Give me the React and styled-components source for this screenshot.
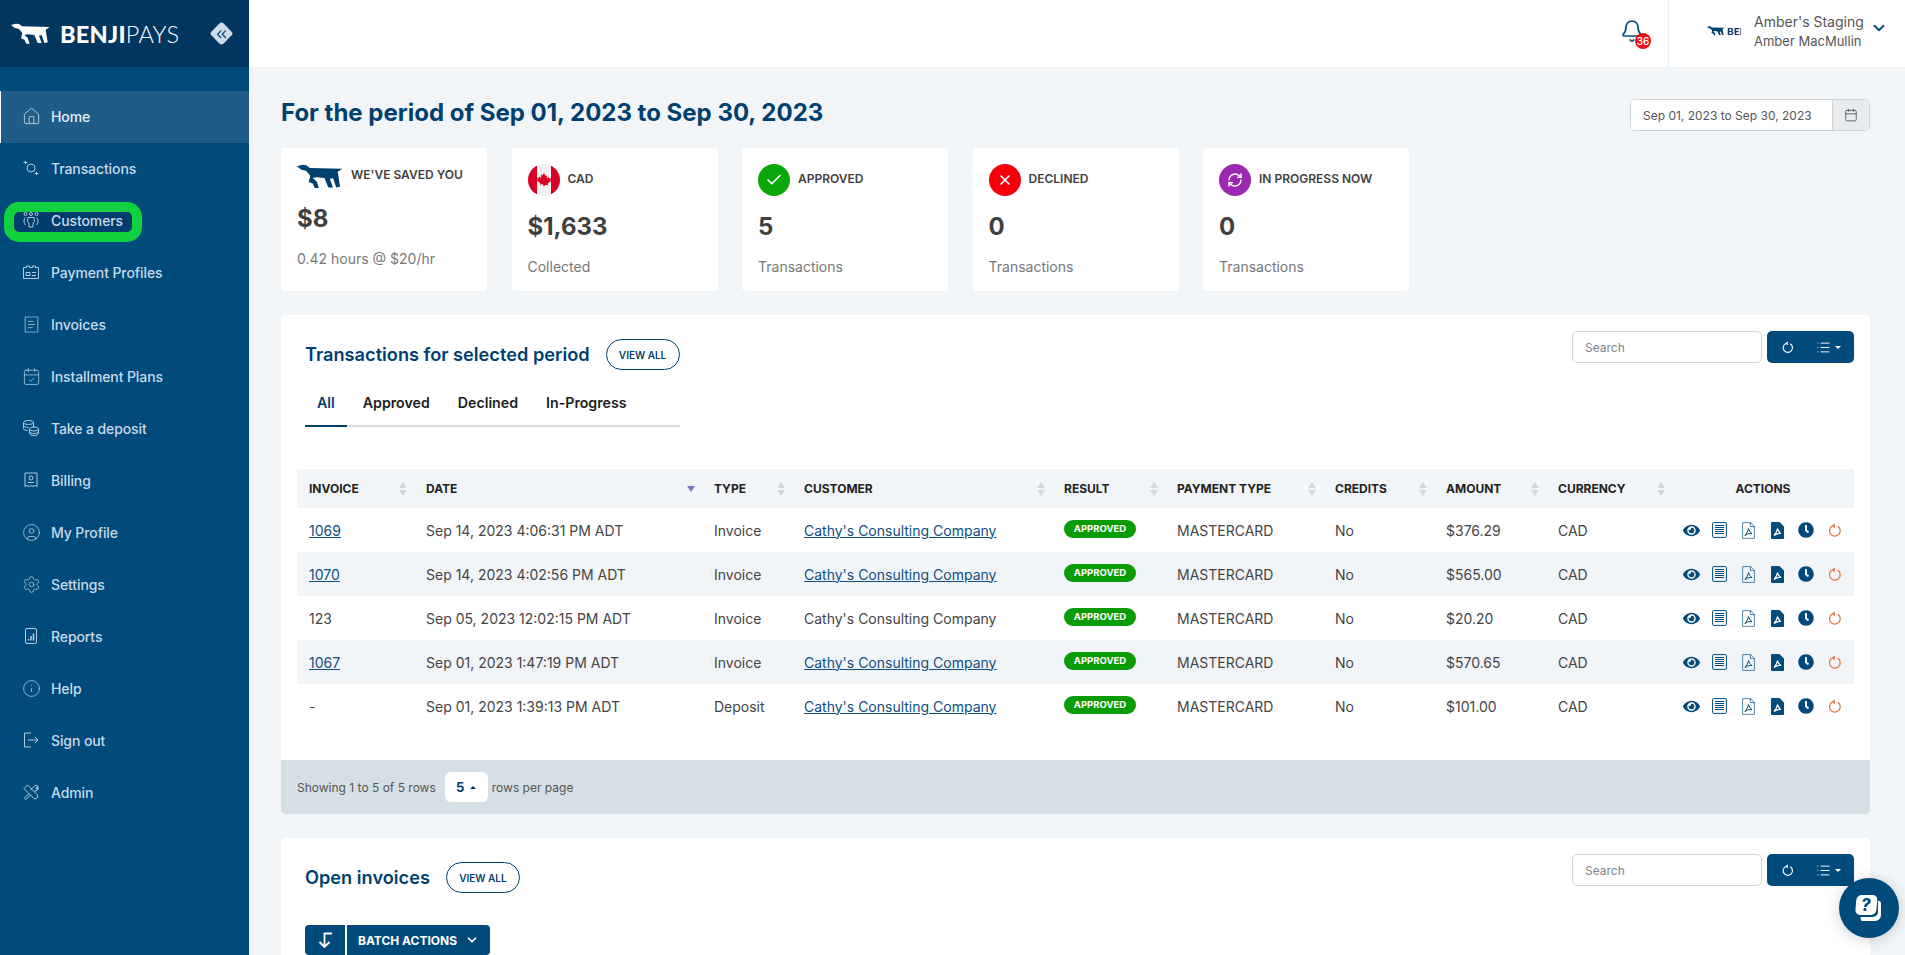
import React from "react";
import styled, { createGlobalStyle } from "styled-components";
import {
  House, ReceiptText, CalendarCheck, CircleUser, Settings, Info, Bell, ChevronDown,
  ChevronsLeft, Check, X, RefreshCw, List, Calendar,
} from "lucide-react";
import { FaEye, FaClock } from "react-icons/fa";

const GlobalStyle = createGlobalStyle`
  html, body { margin: 0; padding: 0; height: 100%; }
  body { font-family: Inter, "Liberation Sans", sans-serif; background: #f2f5f8; color: #444; overflow: hidden; }
  *, *::before, *::after { box-sizing: border-box; }
`;

const NAVY = "#004a7c";

const Shell = styled.div`
  display: flex;
  height: 100vh;
  overflow: hidden;
`;

const Sidebar = styled.aside`
  width: 249px;
  flex: none;
  background: ${NAVY};
`;

const Brand = styled.div`
  height: 67px;
  background: #003660;
  display: flex;
  align-items: center;
  padding: 0 16px 0 11px;
`;

const BrandName = styled.div`
  font-family: Lato, "Liberation Sans", sans-serif;
  font-size: 23.5px;
  color: #fff;
  font-weight: 300;
  letter-spacing: 0.25px;
  margin-left: 9px;
  flex: 1;
  b { font-weight: 900; }
`;

const Collapse = styled.div`
  width: 17px;
  height: 17px;
  margin-right: 3px;
  background: #cfdbe6;
  border-radius: 3px;
  transform: rotate(45deg);
  display: flex;
  align-items: center;
  justify-content: center;
  color: #004a7c;
  svg { transform: rotate(-45deg); flex: none; }
`;

const Nav = styled.nav`
  padding-top: 24px;
`;

const NavItem = styled.div`
  position: relative;
  height: 52px;
  display: flex;
  align-items: center;
  gap: 11px;
  padding: 0 0 2px ${(p) => (p.$active ? 21 : 22)}px;
  font-size: 14px;
  font-weight: 500;
  letter-spacing: -0.1px;
  color: ${(p) => (p.$active ? "#e6f0f7" : "#c6dbea")};
  background: ${(p) => (p.$active ? "#1f5c87" : "transparent")};
  border-left: ${(p) => (p.$active ? "1px solid #fff" : "none")};
  ${(p) =>
    p.$marked &&
    `&::before {
      content: "";
      position: absolute;
      left: 4px;
      top: 7px;
      width: 138px;
      height: 40px;
      background: #003d6c;
      border: 10px solid #12d13f;
      border-radius: 15px;
    }`}
`;

const NavIcon = styled.span`
  position: relative;
  z-index: 1;
  width: 18px;
  height: 18px;
  flex: none;
  display: flex;
  align-items: center;
  justify-content: center;
  opacity: 0.9;
  svg { flex: none; }
`;

const NavLabel = styled.span`
  position: relative;
  z-index: 1;
`;

const Main = styled.div`
  flex: 1;
  min-width: 0;
  display: flex;
  flex-direction: column;
`;

const Topbar = styled.header`
  height: 67px;
  flex: none;
  background: #fff;
  display: flex;
  justify-content: flex-end;
  align-items: stretch;
`;

const BellWrap = styled.div`
  position: relative;
  width: 24px;
  margin: 19px 24px 0 0;
  color: ${NAVY};
`;

const BellBadge = styled.span`
  position: absolute;
  left: 15px;
  top: 14px;
  width: 16px;
  height: 16px;
  border-radius: 50%;
  background: #e8101c;
  color: #fff;
  font-size: 10px;
  font-weight: 500;
  display: flex;
  align-items: center;
  justify-content: center;
`;

const UserBlock = styled.div`
  width: 237px;
  border-left: 1px solid #eceff2;
  display: flex;
  align-items: flex-start;
  padding: 12px 0 0 38px;
`;

const MiniLogo = styled.div`
  width: 34px;
  height: 14px;
  margin: 12px 13px 0 0;
  overflow: hidden;
  display: flex;
  align-items: center;
  gap: 2px;
  flex: none;
  color: #003f6e;
  font-family: Lato, "Liberation Sans", sans-serif;
  font-weight: 900;
  font-size: 10px;
  svg { flex: none; }
`;

const UserNames = styled.div`
  font-size: 14px;
  line-height: 19px;
  color: #555;
  white-space: nowrap;
  width: 116px;
  small { display: block; font-size: 13px; margin-top: 1px; }
`;

const UserChevron = styled.div`
  color: ${NAVY};
  margin-top: 7px;
`;

const Content = styled.main`
  flex: 1;
  padding: 32px 35px 0 32px;
  overflow: hidden;
`;

const TitleRow = styled.div`
  display: flex;
  justify-content: space-between;
  align-items: center;
  height: 32px;
  margin-bottom: 17px;
`;

const PageTitle = styled.h1`
  margin: 0 0 5px;
  font-size: 24px;
  font-weight: 700;
  color: #003f6e;
`;

const DateGroup = styled.div`
  display: flex;
  width: 240px;
  height: 32px;
  border: 1px solid #ced4da;
  border-radius: 5px;
  overflow: hidden;
  background: #fff;
`;

const DateInput = styled.input`
  flex: 1;
  min-width: 0;
  border: none;
  outline: none;
  padding: 0 12px;
  font: 400 12px Inter, sans-serif;
  color: #555;
`;

const DateAddon = styled.div`
  width: 37px;
  background: #e9ecef;
  border-left: 1px solid #ced4da;
  display: flex;
  align-items: center;
  justify-content: center;
  color: #444;
`;

const Cards = styled.div`
  display: flex;
  gap: 24.5px;
  margin-bottom: 24px;
`;

const Card = styled.div`
  width: 206px;
  height: 143px;
  background: #fff;
  border-radius: 4px;
  padding: 16px;
`;

const CardHead = styled.div`
  display: flex;
  align-items: center;
  gap: ${(p) => p.$gap || 8}px;
  font-size: 12px;
  font-weight: 600;
  color: #3f3f3f;
  white-space: nowrap;
`;

const CardLabel = styled.span`
  padding-bottom: 3px;
`;

const CardValue = styled.div`
  margin-top: 16px;
  font-size: 24px;
  line-height: 29px;
  font-weight: 700;
  color: #3f3f3f;
`;

const CardNote = styled.div`
  margin-top: 17px;
  font-size: 14px;
  line-height: 17px;
  color: #777;
`;

const StatusDot = styled.div`
  width: 32px;
  height: 32px;
  border-radius: 50%;
  flex: none;
  background: ${(p) => p.$color};
  color: #fff;
  display: flex;
  align-items: center;
  justify-content: center;
`;

const Panel = styled.section`
  background: #fff;
  border-radius: 4px;
  margin-bottom: 24px;
`;

const PanelTop = styled.div`
  display: flex;
  justify-content: space-between;
  align-items: flex-start;
  padding: 16px 16px 0 24px;
`;

const PanelLead = styled.div`
  padding-top: 8px;
  width: fit-content;
`;

const TitleLine = styled.div`
  display: flex;
  align-items: center;
  gap: 16px;
`;

const PanelTitle = styled.h2`
  margin: 0 0 2px;
  font-size: 18.2px;
  font-weight: 600;
  color: #003f6e;
  white-space: nowrap;
`;

const OutlineButton = styled.button`
  width: 74px;
  height: 31px;
  border: 1px solid #003f6e;
  border-radius: 16px;
  background: #fff;
  color: #003f6e;
  font: 600 10px Inter, sans-serif;
  padding: 0;
`;

const Tabs = styled.div`
  display: flex;
  gap: 4px;
  margin-top: 13px;
  border-bottom: 2px solid #d5dbe1;
`;

const Tab = styled.div`
  padding: 0 12px;
  height: 44px;
  line-height: 40px;
  margin-bottom: -2px;
  font-size: 14.2px;
  font-weight: 600;
  color: ${(p) => (p.$active ? "#003f6e" : "#1c1c1c")};
  border-bottom: 2px solid ${(p) => (p.$active ? "#003f6e" : "transparent")};
`;

const Tools = styled.div`
  display: flex;
  gap: 5px;
`;

const SearchBox = styled.input`
  width: 190px;
  height: 32px;
  border: 1px solid #d3d6d9;
  border-radius: 5px;
  outline: none;
  padding: 0 12px;
  font: 400 12px Inter, sans-serif;
  &::placeholder { color: #7d858c; }
`;

const ToolButtons = styled.div`
  width: 87px;
  height: 32px;
  border-radius: 5px;
  background: ${NAVY};
  color: #fff;
  display: flex;
  align-items: center;
  padding: 0 13px 0 14px;
  justify-content: space-between;
`;

const ListButton = styled.span`
  display: flex;
  align-items: center;
  gap: 4px;
`;

const Caret = styled.i`
  width: 0;
  height: 0;
  border-left: 3px solid transparent;
  border-right: 3px solid transparent;
  border-${(p) => (p.$up ? "bottom" : "top")}: 3px solid ${(p) => p.$color || "#fff"};
`;

const TableWrap = styled.div`
  margin: 42px 16px 32px;
`;

const Table = styled.table`
  width: 100%;
  border-collapse: collapse;
  table-layout: fixed;
`;

const Th = styled.th`
  height: 39px;
  background: #f2f5f8;
  padding: 0 0 0 12px;
  font-size: 12px;
  font-weight: 700;
  color: #222;
  text-align: ${(p) => (p.$center ? "center" : "left")};
`;

const ThInner = styled.div`
  display: flex;
  align-items: center;
  justify-content: ${(p) => (p.$center ? "center" : "space-between")};
  padding-right: ${(p) => (p.$center ? 12 : 7)}px;
`;

const SortMark = styled.span`
  display: flex;
  flex-direction: column;
  gap: 2px;
`;

const Triangle = styled.i`
  width: 0;
  height: 0;
  border-left: 4px solid transparent;
  border-right: 4px solid transparent;
  ${(p) => (p.$up ? "border-bottom" : "border-top")}: 6px solid ${(p) => p.$color};
`;

const Row = styled.tr`
  height: 44px;
  background: ${(p) => (p.$alt ? "#f2f5f8" : "#fff")};
`;

const Td = styled.td`
  padding: 0 0 0 ${(p) => (p.$flush ? 0 : 12)}px;
  font-size: 14px;
  color: #444;
  white-space: nowrap;
`;

const RowLink = styled.a`
  color: #0d4f80;
  text-decoration: underline;
`;

const ResultPill = styled.span`
  display: inline-flex;
  align-items: center;
  justify-content: center;
  width: 72px;
  height: 18px;
  border-radius: 9px;
  background: #0a9c05;
  color: #fff;
  font-size: 9.5px;
  font-weight: 700;
  position: relative;
  top: -2px;
`;

const ActionIcons = styled.div`
  display: flex;
  align-items: center;
  justify-content: flex-end;
  padding-right: 5px;
  color: ${NAVY};
`;

const ActionSlot = styled.span`
  width: 28.7px;
  flex: none;
  display: flex;
  justify-content: center;
  align-items: center;
  color: ${(p) => p.$color || "inherit"};
`;

const PanelFooter = styled.div`
  height: 54px;
  background: #d5dfe6;
  border-radius: 0 0 4px 4px;
  display: flex;
  align-items: center;
  padding: 0 16px;
  font-size: 12px;
  color: #555;
`;

const PageSize = styled.div`
  width: 43px;
  height: 30px;
  margin: 0 4px 0 9px;
  background: #fff;
  border-radius: 6px;
  display: flex;
  align-items: center;
  justify-content: center;
  gap: 6px;
  color: #003f6e;
  font-size: 13px;
  font-weight: 700;
`;

const BatchRow = styled.div`
  display: flex;
  gap: 2px;
  margin: 32px 0 0 24px;
  height: 40px;
  padding-bottom: 40px;
`;

const SortButton = styled.div`
  width: 40px;
  height: 30px;
  background: ${NAVY};
  border-radius: 4px 0 0 4px;
  color: #fff;
  display: flex;
  align-items: center;
  justify-content: center;
`;

const BatchButton = styled.div`
  width: 143px;
  height: 30px;
  background: ${NAVY};
  border-radius: 0 4px 4px 0;
  color: #fff;
  font-size: 12px;
  font-weight: 700;
  display: flex;
  align-items: center;
  justify-content: center;
  gap: 8px;
`;

const HelpFab = styled.div`
  position: fixed;
  right: 6px;
  bottom: 17px;
  width: 60px;
  height: 60px;
  border-radius: 50%;
  background: ${NAVY};
  box-shadow: 0 2px 14px rgba(0, 0, 0, 0.18);
  display: flex;
  align-items: center;
  justify-content: center;
`;

const Dog = ({ width, color = "#fff" }) => (
  <svg width={width} viewBox="0 0 120 62" fill={color} style={{ display: "block", flex: "none" }}>
    <path d="M0 6 L14 2 L24 3 L33 10 L116 12 L104 20 L110 58 L100 60 L92 36 L84 38 L92 60 L80 60 L70 36 L50 34 L40 36 L50 44 L56 62 L46 62 L40 50 L30 46 L34 30 L24 18 L10 14 Z" />
  </svg>
);

const thin = { fill: "none", stroke: "currentColor", strokeWidth: 1 };

const TransactionsIcon = () => (
  <svg width="16" height="16" viewBox="0 0 16 16" {...thin}>
    <circle cx="8" cy="8" r="4" />
    <path d="M0.5 2.500h4M2.500 .8v3.400M11.500 13.500h4M13.500 11.800v3.400" />
  </svg>
);

const CustomersIcon = () => (
  <svg width="16" height="16" viewBox="0 0 16 16" {...thin}>
    <circle cx="2.500" cy="2" r="1.500" />
    <circle cx="8" cy="2" r="1.500" />
    <circle cx="13.500" cy="2" r="1.500" />
    <path d="M5 5.500h6l.6 4-1.600 1.500V15H6v-4L4.400 9.500Z" />
    <path d="M2.500 5.500C.5 7 .5 11 2.500 13M13.500 5.500c2 1.500 2 5.500 0 7.500" />
  </svg>
);

const ProfilesIcon = () => (
  <svg width="16" height="16" viewBox="0 0 16 16" {...thin}>
    <path d="M.5 3.500h3V2h3v1.500h3V2h3v1.500h3V14.500H.5Z" />
    <path d="M3 8.500h4v3H3ZM9 8.500h4M9 11.500h4" />
  </svg>
);

const DepositIcon = () => (
  <svg width="16" height="16" viewBox="0 0 16 16" {...thin}>
    <ellipse cx="5.500" cy="2.500" rx="5" ry="2" />
    <path d="M.5 2.500v6c0 1.100 1.500 1.800 4 2M.5 5.500c0 1.100 2 2 5 2" />
    <ellipse cx="11" cy="9" rx="4.500" ry="2" />
    <path d="M6.500 9v4.500c0 1.100 2 2 4.500 2s4.500-.9 4.500-2V9M6.500 11.500c0 1.100 2 2 4.500 2s4.500-.9 4.500-2M10.500 7V2.500" />
  </svg>
);

const BillingIcon = () => (
  <svg width="16" height="16" viewBox="0 0 16 16" {...thin}>
    <path d="M2 1h12v13.500l-2-1-2 1-2-1-2 1-2-1-2 1Z" />
    <circle cx="8" cy="6" r="2" />
    <path d="M5 10.500h6" />
  </svg>
);

const ReportsIcon = () => (
  <svg width="16" height="16" viewBox="0 0 16 16" {...thin}>
    <rect x="2.500" y=".5" width="11" height="15" rx="1.500" />
    <path d="M5.500 11v1.500M8 8v4.500M10.500 5.500v7" strokeWidth="1.600" />
  </svg>
);

const SignOutIcon = () => (
  <svg width="16" height="16" viewBox="0 0 16 16" {...thin}>
    <path d="M8 1H1.500v14H8M5 8h10M12 5l3 3-3 3" />
  </svg>
);

const AdminIcon = () => (
  <svg width="16" height="16" viewBox="0 0 16 16" {...thin}>
    <path d="M4.500 1 1 4.500l9.500 9.500a2.400 2.400 0 0 0 3.500-3.500Z" />
    <path d="M7.500 6 12 1.500a3 3 0 0 1 3 .5l-2.500 2.500 1 1L15 3a3 3 0 0 1-3.500 4M6 9.500 2 13.500a1 1 0 0 0 1.500 1.500L7.500 11" />
  </svg>
);

const navItems = [
  ["Home", <House size={19} strokeWidth={1} />],
  ["Transactions", <TransactionsIcon />],
  ["Customers", <CustomersIcon />],
  ["Payment Profiles", <ProfilesIcon />],
  ["Invoices", <ReceiptText size={19} strokeWidth={1} />],
  ["Installment Plans", <CalendarCheck size={19} strokeWidth={1} />],
  ["Take a deposit", <DepositIcon />],
  ["Billing", <BillingIcon />],
  ["My Profile", <CircleUser size={19} strokeWidth={1} />],
  ["Settings", <Settings size={19} strokeWidth={1} />],
  ["Reports", <ReportsIcon />],
  ["Help", <Info size={19} strokeWidth={1} />],
  ["Sign out", <SignOutIcon />],
  ["Admin", <AdminIcon />],
];

const Flag = () => (
  <svg width="32" height="32" viewBox="0 0 32 32" style={{ flex: "none" }}>
    <clipPath id="flag-clip"><circle cx="16" cy="16" r="16" /></clipPath>
    <g clipPath="url(#flag-clip)">
      <rect width="32" height="32" fill="#f0f0f0" />
      <rect width="9" height="32" fill="#d80027" />
      <rect x="23" width="9" height="32" fill="#d80027" />
      <path
        d="M16 9l1.600 3 1.600-.8-.6 3.600 2-1.800.6 1.400 2-.4-.8 2.400.8.600-3.600 2.800.4 1.400-3.200-.4V22h-1.600v-1.800l-3.200.4.4-1.400-3.600-2.800.8-.6-.8-2.400 2 .4.6-1.400 2 1.800-.6-3.600 1.600.8Z"
        fill="#d80027"
      />
    </g>
  </svg>
);

const RefreshGlyph = ({ size = 14 }) => (
  <svg width={size} height={size} viewBox="0 0 14 14" fill="none" stroke="currentColor" strokeWidth="1.200">
    <path d="M5.200 2.700a5 5 0 1 0 4.800 .3" />
    <path d="M7.400 .3 4.400 2.700l3 2Z" fill="currentColor" stroke="none" />
  </svg>
);

const DocGlyph = () => (
  <svg width="15" height="16" viewBox="0 0 15 16" fill="none" stroke="currentColor">
    <rect x=".6" y=".6" width="13.800" height="14.800" rx="1" />
    <path d="M3 3.500h9M3 5.500h9M3 7.500h9M3 9.500h9M3 11.500h9" strokeWidth="1" />
  </svg>
);

const PdfOutline = () => (
  <svg width="13" height="17" viewBox="0 0 13 17" fill="none" stroke="currentColor" strokeWidth="0.9">
    <path d="M.6.6h8l3.800 3.800v12H.6Z" opacity="0.75" />
    <path d="M8.400.6v4h4" opacity="0.75" />
    <path d="M6.500 6.500c-.4 2-1.500 5-3.600 7 2-1.400 5-2.400 7-2-1.800-1-2.800-3-3.400-5Z" strokeWidth="1" />
  </svg>
);

const PdfFilled = () => (
  <svg width="13" height="17" viewBox="0 0 13 17">
    <path d="M1 0h7.500L13 4.500V16a1 1 0 0 1-1 1H1a1 1 0 0 1-1-1V1a1 1 0 0 1 1-1Z" fill="currentColor" />
    <path d="M6.500 6.500c-.4 2-1.500 5-3.600 7 2-1.400 5-2.400 7-2-1.800-1-2.800-3-3.400-5Z" fill="none" stroke="#fff" strokeWidth="1.200" />
  </svg>
);

const SortDownGlyph = () => (
  <svg width="18" height="18" viewBox="0 0 18 18" fill="none" stroke="currentColor" strokeWidth="1.800">
    <path d="M16 2.500H8.500V16M3.500 11l5 5 5-5" />
  </svg>
);

const SortGlyph = ({ active }) =>
  active ? (
    <SortMark><Triangle $color="#7a76c6" /></SortMark>
  ) : (
    <SortMark>
      <Triangle $up $color="#d5d9de" />
      <Triangle $color="#d5d9de" />
    </SortMark>
  );

const columns = [
  ["INVOICE", 117],
  ["DATE", 288, true],
  ["TYPE", 90],
  ["CUSTOMER", 260],
  ["RESULT", 113],
  ["PAYMENT TYPE", 158],
  ["CREDITS", 111],
  ["AMOUNT", 112],
  ["CURRENCY", 126],
];

const rows = [
  ["1069", true, "Sep 14, 2023 4:06:31 PM ADT", "Invoice", true, "$376.29"],
  ["1070", true, "Sep 14, 2023 4:02:56 PM ADT", "Invoice", true, "$565.00"],
  ["123", false, "Sep 05, 2023 12:02:15 PM ADT", "Invoice", false, "$20.20"],
  ["1067", true, "Sep 01, 2023 1:47:19 PM ADT", "Invoice", true, "$570.65"],
  ["-", false, "Sep 01, 2023 1:39:13 PM ADT", "Deposit", true, "$101.00"],
];

const Toolbar = () => (
  <Tools>
    <SearchBox placeholder="Search" />
    <ToolButtons>
      <RefreshGlyph size={13} />
      <ListButton>
        <List size={15} strokeWidth={1.5} />
        <Caret />
      </ListButton>
    </ToolButtons>
  </Tools>
);

export default function App() {
  return (
    <Shell>
      <GlobalStyle />
      <Sidebar>
        <Brand>
          <Dog width={40} />
          <BrandName><b>BENJI</b>PAYS</BrandName>
          <Collapse><ChevronsLeft size={16} strokeWidth={1.8} /></Collapse>
        </Brand>
        <Nav>
          {navItems.map(([label, icon]) => (
            <NavItem key={label} $active={label === "Home"} $marked={label === "Customers"}>
              <NavIcon>{icon}</NavIcon>
              <NavLabel>{label}</NavLabel>
            </NavItem>
          ))}
        </Nav>
      </Sidebar>
      <Main>
        <Topbar>
          <BellWrap>
            <Bell size={24} strokeWidth={1.7} />
            <BellBadge>36</BellBadge>
          </BellWrap>
          <UserBlock>
            <MiniLogo><Dog width={18} color="#003f6e" />BENJI</MiniLogo>
            <UserNames>
              Amber's Staging
              <small>Amber MacMullin</small>
            </UserNames>
            <UserChevron><ChevronDown size={18} strokeWidth={2.5} /></UserChevron>
          </UserBlock>
        </Topbar>
        <Content>
          <TitleRow>
            <PageTitle>For the period of Sep 01, 2023 to Sep 30, 2023</PageTitle>
            <DateGroup>
              <DateInput readOnly value="Sep 01, 2023 to Sep 30, 2023" />
              <DateAddon><Calendar size={14} strokeWidth={1.3} /></DateAddon>
            </DateGroup>
          </TitleRow>
          <Cards>
            <Card>
              <CardHead $gap={7}><Dog width={47} color="#003f6e" /><CardLabel>WE'VE SAVED YOU</CardLabel></CardHead>
              <CardValue>$8</CardValue>
              <CardNote>0.42 hours @ $20/hr</CardNote>
            </Card>
            <Card>
              <CardHead><Flag /><CardLabel>CAD</CardLabel></CardHead>
              <CardValue>$1,633</CardValue>
              <CardNote>Collected</CardNote>
            </Card>
            <Card>
              <CardHead><StatusDot $color="#0aa70a"><Check size={18} strokeWidth={2.2} /></StatusDot><CardLabel>APPROVED</CardLabel></CardHead>
              <CardValue>5</CardValue>
              <CardNote>Transactions</CardNote>
            </Card>
            <Card>
              <CardHead><StatusDot $color="#f5000a"><X size={16} strokeWidth={2.4} /></StatusDot><CardLabel>DECLINED</CardLabel></CardHead>
              <CardValue>0</CardValue>
              <CardNote>Transactions</CardNote>
            </Card>
            <Card>
              <CardHead><StatusDot $color="#9c27b0"><RefreshCw size={16} strokeWidth={2.2} /></StatusDot><CardLabel>IN PROGRESS NOW</CardLabel></CardHead>
              <CardValue>0</CardValue>
              <CardNote>Transactions</CardNote>
            </Card>
          </Cards>
          <Panel>
            <PanelTop>
              <PanelLead>
                <TitleLine>
                  <PanelTitle>Transactions for selected period</PanelTitle>
                  <OutlineButton>VIEW ALL</OutlineButton>
                </TitleLine>
                <Tabs>
                  <Tab $active>All</Tab>
                  <Tab>Approved</Tab>
                  <Tab>Declined</Tab>
                  <Tab>In-Progress</Tab>
                </Tabs>
              </PanelLead>
              <Toolbar />
            </PanelTop>
            <TableWrap>
              <Table>
                <thead>
                  <tr>
                    {columns.map(([label, width, active]) => (
                      <Th key={label} style={{ width }}>
                        <ThInner>{label}<SortGlyph active={active} /></ThInner>
                      </Th>
                    ))}
                    <Th $center><ThInner $center>ACTIONS</ThInner></Th>
                  </tr>
                </thead>
                <tbody>
                  {rows.map(([invoice, invoiceLink, date, type, customerLink, amount], i) => (
                    <Row key={date} $alt={i % 2 === 1}>
                      <Td>{invoiceLink ? <RowLink>{invoice}</RowLink> : invoice}</Td>
                      <Td>{date}</Td>
                      <Td>{type}</Td>
                      <Td>{customerLink ? <RowLink>Cathy's Consulting Company</RowLink> : "Cathy's Consulting Company"}</Td>
                      <Td><ResultPill>APPROVED</ResultPill></Td>
                      <Td>MASTERCARD</Td>
                      <Td>No</Td>
                      <Td>{amount}</Td>
                      <Td>CAD</Td>
                      <Td $flush>
                        <ActionIcons>
                          <ActionSlot><FaEye size={17} /></ActionSlot>
                          <ActionSlot><DocGlyph /></ActionSlot>
                          <ActionSlot><PdfOutline /></ActionSlot>
                          <ActionSlot><PdfFilled /></ActionSlot>
                          <ActionSlot><FaClock size={16} /></ActionSlot>
                          <ActionSlot $color="#e07b45"><RefreshGlyph size={15} /></ActionSlot>
                        </ActionIcons>
                      </Td>
                    </Row>
                  ))}
                </tbody>
              </Table>
            </TableWrap>
            <PanelFooter>
              Showing 1 to 5 of 5 rows
              <PageSize>5 <Caret $up $color="#003f6e" /></PageSize>
              rows per page
            </PanelFooter>
          </Panel>
          <Panel>
            <PanelTop>
              <PanelLead>
                <TitleLine>
                  <PanelTitle>Open invoices</PanelTitle>
                  <OutlineButton>VIEW ALL</OutlineButton>
                </TitleLine>
              </PanelLead>
              <Toolbar />
            </PanelTop>
            <BatchRow>
              <SortButton><SortDownGlyph /></SortButton>
              <BatchButton>BATCH ACTIONS <ChevronDown size={14} strokeWidth={3} /></BatchButton>
            </BatchRow>
          </Panel>
        </Content>
      </Main>
      <HelpFab>
        <svg width="32" height="32" viewBox="0 0 32 32">
          <path d="M9 29h13a6 6 0 0 0 6-6V11a2 2 0 0 0-1.600-1.800L25 8.600V20a5 5 0 0 1-5 5H7.500l.3 2.500A2 2 0 0 0 9 29Z" fill="#fff" />
          <rect x="2" y="3" width="21" height="20" rx="5" fill="#fff" transform="skewX(-5) translate(2 0)" />
          <text x="13" y="19" textAnchor="middle" fontFamily="Inter, sans-serif" fontWeight="800" fontStyle="italic" fontSize="17" fill="#004a7c">?</text>
        </svg>
      </HelpFab>
    </Shell>
  );
}
